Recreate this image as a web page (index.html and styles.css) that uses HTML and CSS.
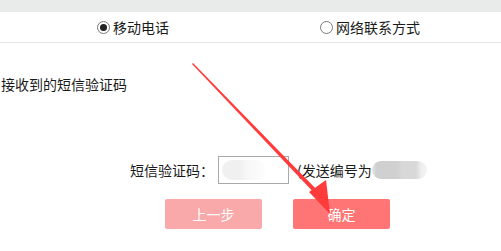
FILE: index.html
```html
<!DOCTYPE html>
<html>
<head>
<meta charset="utf-8">
<link rel="stylesheet" href="styles.css">
</head>
<body>
<div class="page">
  <div class="topbar"></div>
  <div class="tabs">
    <label class="radio checked"><span class="dot"></span>移动电话</label>
    <label class="radio second"><span class="dot"></span>网络联系方式</label>
  </div>
  <p class="hint">接收到的短信验证码</p>
  <div class="form-row">
    <span class="label">短信验证码：</span>
    <span class="input"><span class="blur-a"></span></span>
    <span class="note">(发送编号为<span class="blur-b"></span></span>
  </div>
  <div class="buttons">
    <span class="btn prev">上一步</span>
    <span class="btn ok">确定</span>
  </div>
  <svg class="arrow" width="501" height="251" viewBox="0 0 501 251">
    <polygon points="192,64 193,63 321,194 318,197" fill="#ff3b3b"/>
    <polygon points="330,214 309,192 326,180" fill="#ff3b3b"/>
  </svg>
</div>
</body>
</html>
```
FILE: styles.css
```css
html, body {
  margin: 0;
  padding: 0;
  background: #fff;
}
.page {
  position: relative;
  width: 501px;
  height: 251px;
  overflow: hidden;
  font-family: "Noto Sans CJK SC", "Microsoft YaHei", sans-serif;
  font-size: 14px;
  color: #1a1a1a;
}
.topbar {
  height: 12px;
  background: #e9eaea;
}
.tabs {
  display: flex;
  height: 30px;
  align-items: center;
  padding-left: 97px;
  border-bottom: 1px solid #e6e6e6;
}
.radio {
  display: flex;
  align-items: center;
  line-height: 16px;
}
.radio.second {
  margin-left: 151px;
}
.dot {
  box-sizing: border-box;
  width: 13px;
  height: 13px;
  border: 1px solid #7a7a7a;
  border-radius: 50%;
  margin-right: 3px;
  display: flex;
  align-items: center;
  justify-content: center;
  background: #fff;
}
.checked .dot::after {
  content: "";
  width: 7px;
  height: 7px;
  border-radius: 50%;
  background: #222;
}
.hint {
  margin: 31px 0 0 1px;
  line-height: 20px;
}
.form-row {
  display: flex;
  align-items: center;
  margin-top: 62px;
  padding-left: 130px;
  height: 28px;
}
.label {
  width: 88px;
}
.input {
  box-sizing: border-box;
  width: 71px;
  height: 28px;
  border: 1px solid #a9a9a9;
  display: flex;
  align-items: center;
  padding-left: 3px;
}
.blur-a {
  width: 44px;
  height: 20px;
  border-radius: 10px;
  background: linear-gradient(90deg, #f0f0f0 0, #f0f0f0 40%, #f8f8f8 60%, #fdfdfd 100%);
}
.note {
  display: flex;
  align-items: center;
  margin-left: 8px;
}
.blur-b {
  width: 55px;
  height: 18px;
  border-radius: 9px;
  background: linear-gradient(90deg, #e8e8e8 0, #cfcfcf 8%, #d0d0d0 45%, #d8d8d8 55%, #d8d8d8 80%, #efefef 90%, #f4f4f4 100%);
}
.buttons {
  display: flex;
  gap: 31px;
  margin-top: 15px;
  padding-left: 165px;
}
.btn {
  width: 97px;
  height: 30px;
  border-radius: 2px;
  color: #fff;
  display: flex;
  align-items: center;
  justify-content: center;
}
.prev {
  background: #f9a9a9;
}
.ok {
  background: #ff7474;
}
.arrow {
  position: absolute;
  left: 0;
  top: 0;
  pointer-events: none;
}
```
